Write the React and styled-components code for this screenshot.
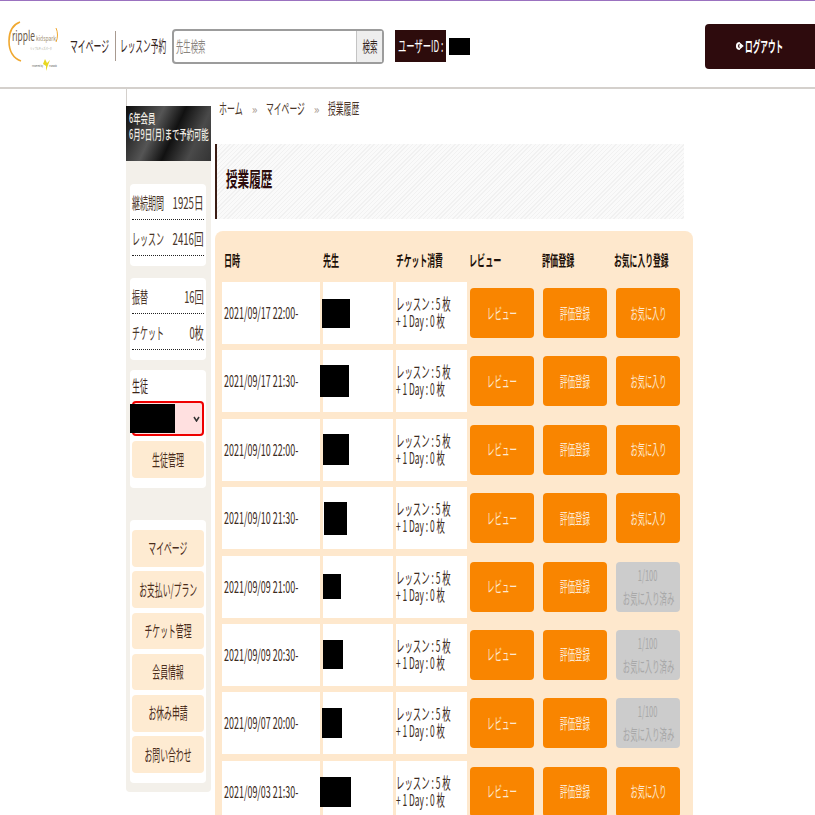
import styled, { createGlobalStyle } from 'styled-components';

const GlobalStyle = createGlobalStyle`
    html, body {
        margin: 0;
        padding: 0;
        background: #ffffff;
    }
    body {
        font-family: "Noto Sans CJK JP", "Liberation Sans", sans-serif;
        color: #3b2318;
    }
`;

const lessons = [
    { date: '2021/09/17 22:00-', box: [28, 29, -1], done: false },
    { date: '2021/09/17 21:30-', box: [29, 32, -3], done: false },
    { date: '2021/09/10 22:00-', box: [26, 31, 0], done: false },
    { date: '2021/09/10 21:30-', box: [23, 33, 1], done: false },
    { date: '2021/09/09 21:00-', box: [18, 25, 0], done: true },
    { date: '2021/09/09 20:30-', box: [20, 29, 0], done: true },
    { date: '2021/09/07 20:00-', box: [20, 30, -1], done: true },
    { date: '2021/09/03 21:30-', box: [31, 30, -3], done: false },
];

const menus = ['マイページ', 'お支払い/プラン', 'チケット管理', '会員情報', 'お休み申請', 'お問い合わせ'];

// 원본 글자가 가로로 눌려 있어서 scaleX로 맞춤
const Narrow = styled.span`
    display: inline-block;
    white-space: nowrap;
    transform: translateY(-1.5px) scaleX(${({ $s }) => $s || 0.5});
    transform-origin: ${({ $o }) => $o || 'left'} center;
    flex: none;
`;

function Logo() {
    return (
        <LogoBox>
            <svg width="50" height="50" viewBox="0 0 50 50">
                <path d="M12 1 C4 4 1 12 1 20 C1 31 5 37 13 40" fill="none" stroke="#f0a830" strokeWidth="1.6" />
                <path d="M48 7 C50 11 50 17 48 21" fill="none" stroke="#f0a830" strokeWidth="1" />
                <text x="4" y="20" fontSize="14" fill="#6b5a4a" textLength="23" lengthAdjust="spacingAndGlyphs">ripple</text>
                <text x="28" y="20" fontSize="6" fill="#a08c70" textLength="20" lengthAdjust="spacingAndGlyphs">kidspark</text>
                <text x="22" y="29" fontSize="3.5" fill="#998" textLength="22" lengthAdjust="spacingAndGlyphs">リップルキッズパーク</text>
                <text x="24" y="46" fontSize="2.5" fill="#555" textLength="11" lengthAdjust="spacingAndGlyphs">Powered by</text>
                <path d="M37 38 L39 42 L42 39 L40 44 L38 50 L38 45 L35 43 Z" fill="#e8d820" />
                <text x="41" y="46" fontSize="2.5" fill="#555" textLength="8" lengthAdjust="spacingAndGlyphs">Manabi</text>
            </svg>
        </LogoBox>
    );
}

function App() {
    return (
        <Page>
            <GlobalStyle />
            <Header>
                <Logo />
                <NavItem $w={45}><Narrow $s={0.49}>マイページ</Narrow></NavItem>
                <NavItem $w={52} $line><Narrow $s={0.48}>レッスン予約</Narrow></NavItem>
                <SearchBox>
                    <SearchText><Narrow $s={0.49}>先生検索</Narrow></SearchText>
                    <SearchButton><Narrow $o="center">検索</Narrow></SearchButton>
                </SearchBox>
                <UserId><Narrow $s={0.52} $o="center">ユーザーID :</Narrow></UserId>
                <UserMask />
                <Logout>
                    <svg width="9" height="10" viewBox="0 0 24 24" fill="none" stroke="#fff" strokeWidth="5">
                        <path d="M13 4 A8 8 0 1 0 13 20" />
                        <path d="M10 12 H16 M14 6 L21 12 L14 18 Z" fill="#fff" strokeWidth="3" />
                    </svg>
                    <LogoutLabel><Narrow $s={0.51}>ログアウト</Narrow></LogoutLabel>
                </Logout>
            </Header>
            <Body>
                <SideColumn>
                    <SideTick />
                    <Sidebar>
                        <Banner>
                            <Narrow $s={0.565}>6年会員</Narrow>
                            <Narrow $s={0.565}>6月9日(月)まで予約可能</Narrow>
                        </Banner>
                        <Card $top={23}>
                            <StatRow><StatLabel><Narrow>継続期間</Narrow></StatLabel><StatValue><Narrow $s={0.6} $o="right">1925日</Narrow></StatValue></StatRow>
                            <StatRow><StatLabel><Narrow>レッスン</Narrow></StatLabel><StatValue><Narrow $s={0.6} $o="right">2416回</Narrow></StatValue></StatRow>
                        </Card>
                        <Card $top={12}>
                            <StatRow><StatLabel><Narrow>振替</Narrow></StatLabel><StatValue><Narrow $s={0.58} $o="right">16回</Narrow></StatValue></StatRow>
                            <StatRow><StatLabel><Narrow>チケット</Narrow></StatLabel><StatValue><Narrow $s={0.58} $o="right">0枚</Narrow></StatValue></StatRow>
                        </Card>
                        <Card $top={10}>
                            <StudentLabel><Narrow>生徒</Narrow></StudentLabel>
                            <StudentSelect>
                                <SelectMask />
                                <svg width="7" height="6" viewBox="0 0 7 6" fill="none" stroke="#333" strokeWidth="1.5">
                                    <path d="M1 1 L3.5 5 L6 1" />
                                </svg>
                            </StudentSelect>
                            <SideButton $h={37} $top={5}><Narrow $o="center">生徒管理</Narrow></SideButton>
                        </Card>
                        <Card $top={32}>
                            <MenuList>
                                {menus.map((m) => (
                                    <SideButton key={m}><Narrow $o="center" $s={0.49}>{m}</Narrow></SideButton>
                                ))}
                            </MenuList>
                        </Card>
                    </Sidebar>
                </SideColumn>
                <Main>
                    <Breadcrumb>
                        <Narrow $s={0.53}>ホーム</Narrow>
                        <Sep>»</Sep>
                        <Narrow $s={0.52}>マイページ</Narrow>
                        <Sep>»</Sep>
                        <Narrow $s={0.52}>授業履歴</Narrow>
                    </Breadcrumb>
                    <TitleBand><Title><Narrow $s={0.58}>授業履歴</Narrow></Title></TitleBand>
                    <Panel>
                        <HeadRow>
                            <HeadCell $left={2}><Narrow $s={0.54}>日時</Narrow></HeadCell>
                            <HeadCell><Narrow $s={0.54}>先生</Narrow></HeadCell>
                            <HeadCell><Narrow $s={0.52}>チケット消費</Narrow></HeadCell>
                            <HeadGroup>
                                <HeadCell><Narrow $s={0.54}>レビュー</Narrow></HeadCell>
                                <HeadCell><Narrow $s={0.54}>評価登録</Narrow></HeadCell>
                                <HeadCell><Narrow $s={0.52}>お気に入り登録</Narrow></HeadCell>
                            </HeadGroup>
                        </HeadRow>
                        {lessons.map((l) => (
                            <Row key={l.date}>
                                <Cell $left={2}><DateText><Narrow $s={0.56}>{l.date}</Narrow></DateText></Cell>
                                <Cell>
                                    <TeacherMask $w={l.box[0]} $h={l.box[1]} $x={l.box[2]} />
                                </Cell>
                                <Cell>
                                    <TicketText>
                                        <Narrow $s={0.525}>レッスン : 5 枚</Narrow>
                                        <Narrow $s={0.525}>+ 1 Day : 0 枚</Narrow>
                                    </TicketText>
                                </Cell>
                                <ButtonGroup>
                                    <ActionButton><Narrow $o="center">レビュー</Narrow></ActionButton>
                                    <ActionButton><Narrow $o="center">評価登録</Narrow></ActionButton>
                                    {l.done ? (
                                        <ActionButton $done>
                                            <Narrow $o="center">1/100</Narrow>
                                            <Narrow $o="center" $s={0.49}>お気に入り済み</Narrow>
                                        </ActionButton>
                                    ) : (
                                        <ActionButton><Narrow $o="center" $s={0.48}>お気に入り</Narrow></ActionButton>
                                    )}
                                </ButtonGroup>
                            </Row>
                        ))}
                    </Panel>
                </Main>
            </Body>
        </Page>
    );
}
export default App;

const Page = styled.div`
    width: 815px;
    height: 815px;
    overflow: hidden;
    position: relative;
`;

const Header = styled.header`
    height: 89px;
    box-sizing: border-box;
    padding-top: 4px;
    border-top: 1px solid #9b72c0;
    border-bottom: 2px solid #d4d0cc;
    display: flex;
    align-items: center;
`;

const LogoBox = styled.div`
    width: 50px;
    height: 50px;
    margin-left: 8px;
    margin-right: 12px;
    flex: none;
    & > svg {
        overflow: visible;
    }
`;

const NavItem = styled.div`
    width: ${({ $w }) => $w}px;
    height: 30px;
    display: flex;
    align-items: center;
    font-size: 16px;
    color: #33221a;
    flex: none;
    ${({ $line }) => $line && 'border-left: 1px solid #a89a90; padding-left: 4px;'}
`;

const SearchBox = styled.div`
    width: 212px;
    height: 35px;
    box-sizing: border-box;
    border: 2px solid #9c9c9c;
    border-radius: 4px;
    display: flex;
    margin-right: 11px;
    flex: none;
`;

const SearchText = styled.div`
    flex: 1;
    min-width: 0;
    display: flex;
    align-items: center;
    padding-left: 2px;
    font-size: 15px;
    color: #8a8580;
    overflow: hidden;
`;

const SearchButton = styled.div`
    width: 25px;
    background: #eeeeee;
    border-left: 1px solid #c4c4c4;
    display: flex;
    align-items: center;
    justify-content: center;
    font-size: 15px;
    color: #33221a;
`;

const UserId = styled.div`
    width: 51px;
    height: 32px;
    background: #2d0c0c;
    color: #ffffff;
    font-size: 16px;
    display: flex;
    align-items: center;
    justify-content: center;
    margin-right: 3px;
    flex: none;
`;

const UserMask = styled.div`
    width: 21px;
    height: 17px;
    background: #000000;
    flex: none;
`;

const Logout = styled.div`
    margin-left: auto;
    width: 110px;
    height: 45px;
    background: #2e0b0d;
    border-radius: 4px 0 0 4px;
    color: #ffffff;
    display: flex;
    align-items: center;
    padding-left: 30px;
    box-sizing: border-box;
    gap: 1px;
`;

const LogoutLabel = styled.div`
    width: 40px;
    font-size: 15px;
    font-weight: 700;
`;

const Body = styled.div`
    display: flex;
    padding-left: 126px;
    align-items: flex-start;
`;

const SideColumn = styled.div`
    width: 85px;
    flex: none;
    margin-right: 4px;
`;

const SideTick = styled.div`
    width: 1px;
    height: 17px;
    background: #d4d0cc;
`;

const Sidebar = styled.aside`
    background: #f3f0ea;
    padding-bottom: 9px;
    border-radius: 0 0 4px 4px;
`;

const Banner = styled.div`
    height: 55px;
    box-sizing: border-box;
    padding: 5px 0 0 3px;
    background: linear-gradient(115deg, #0c0c0c 0%, #3a3a3a 22%, #555 35%, #111 55%, #4a4a4a 78%, #333 100%);
    color: #f0ece4;
    font-size: 13px;
    line-height: 16px;
    display: flex;
    flex-direction: column;
    font-weight: 500;
`;

const Card = styled.div`
    margin: ${({ $top }) => $top}px 5px 0 4px;
    background: #ffffff;
    border-radius: 4px;
    padding: 0 2px 10px;
`;

const StatRow = styled.div`
    height: 36px;
    box-sizing: border-box;
    border-bottom: 1px dotted #222222;
    display: flex;
    align-items: center;
    font-size: 16px;
    color: #4a3528;
    padding-top: 2px;
`;

const StatLabel = styled.div`
    flex: 1;
    min-width: 0;
`;

const StatValue = styled.div`
    flex: none;
`;

const StudentLabel = styled.div`
    height: 31px;
    display: flex;
    align-items: center;
    font-size: 16px;
    color: #3b2318;
`;

const StudentSelect = styled.div`
    height: 35px;
    box-sizing: border-box;
    border: 2px solid #ee0000;
    border-radius: 4px;
    background: #ffe0e0;
    display: flex;
    align-items: center;
    justify-content: flex-end;
    padding-right: 2px;
    position: relative;
`;

const SelectMask = styled.div`
    position: absolute;
    left: -4px;
    top: 1px;
    width: 45px;
    height: 29px;
    background: #000000;
`;

const SideButton = styled.div`
    height: ${({ $h }) => $h || 36.5}px;
    margin-top: ${({ $top }) => $top || 0}px;
    background: #feebd2;
    border-radius: 4px;
    display: flex;
    align-items: center;
    justify-content: center;
    font-size: 16px;
    color: #4a2c1a;
`;

const MenuList = styled.div`
    padding-top: 10px;
    display: flex;
    flex-direction: column;
    gap: 4.8px;
`;

const Main = styled.main`
    width: 478px;
    flex: none;
`;

const Breadcrumb = styled.nav`
    height: 18px;
    margin-top: 10px;
    padding-left: 4px;
    display: flex;
    align-items: center;
    font-size: 15px;
    color: #4a3528;
    & > span:nth-of-type(1) { width: 24px; }
    & > span:nth-of-type(3) { width: 39px; }
`;

const Sep = styled.span`
    width: 23px;
    text-align: center;
    color: #a89a90;
    font-size: 12px;
`;

const TitleBand = styled.div`
    width: 469px;
    height: 75px;
    box-sizing: border-box;
    margin-top: 27px;
    border-left: 2px solid #3a1c14;
    background: repeating-linear-gradient(135deg, #f1f1f1 0 1px, #fafafa 1px 3px);
    display: flex;
    align-items: center;
    padding: 0 0 4px 9px;
`;

const Title = styled.h1`
    margin: 0;
    font-size: 20px;
    font-weight: 700;
    color: #2d0c0c;
`;

const Panel = styled.section`
    margin-top: 12px;
    background: #fee8cd;
    border-radius: 8px 8px 0 0;
    padding: 0 13px 0 7px;
`;

const HeadRow = styled.div`
    height: 51px;
    padding-top: 7px;
    box-sizing: border-box;
    display: grid;
    grid-template-columns: 98px 70px 71px 210px;
    column-gap: 3px;
    align-items: center;
`;

const HeadCell = styled.div`
    font-size: 15px;
    font-weight: 700;
    color: #1c1008;
    padding-left: ${({ $left }) => $left || 0}px;
`;

const HeadGroup = styled.div`
    display: grid;
    grid-template-columns: 73px 72px 65px;
    margin-left: -1px;
`;

const Row = styled.div`
    display: grid;
    grid-template-columns: 98px 70px 71px 210px;
    column-gap: 3px;
    height: 62px;
    margin-bottom: 6.4px;
`;

const Cell = styled.div`
    background: #ffffff;
    display: flex;
    align-items: center;
    padding-left: ${({ $left }) => $left || 0}px;
`;

const DateText = styled.div`
    font-size: 16px;
    color: #3b2a20;
`;

const TicketText = styled.div`
    font-size: 16px;
    line-height: 17px;
    color: #3b2a20;
    display: flex;
    flex-direction: column;
`;

const TeacherMask = styled.div`
    width: ${({ $w }) => $w}px;
    height: ${({ $h }) => $h}px;
    margin-left: ${({ $x }) => $x}px;
    background: #000000;
    flex: none;
`;

const ButtonGroup = styled.div`
    display: flex;
    gap: 9px;
    align-items: center;
`;

const ActionButton = styled.div`
    width: 64px;
    height: 50px;
    border-radius: 4px;
    background: ${({ $done }) => ($done ? '#cccccc' : '#f98500')};
    color: ${({ $done }) => ($done ? '#a8a8a8' : '#fde8d0')};
    font-size: 15px;
    line-height: 23px;
    display: flex;
    flex-direction: column;
    align-items: center;
    justify-content: center;
`;
